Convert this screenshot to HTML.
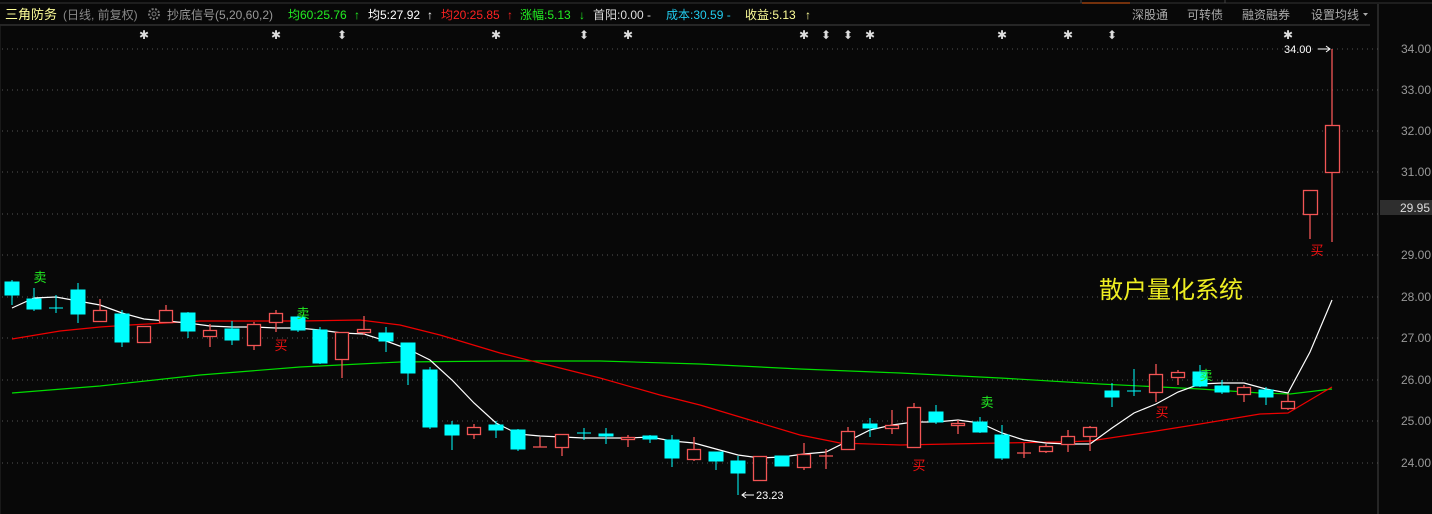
<!DOCTYPE html>
<html><head><meta charset="utf-8"><style>
html,body{margin:0;padding:0;background:#080808;width:1432px;height:514px;overflow:hidden}
svg{display:block}
text{font-family:"Liberation Sans","Noto Sans CJK SC",sans-serif}
</style></head><body>
<svg width="1432" height="514" viewBox="0 0 1432 514" xmlns="http://www.w3.org/2000/svg">
<rect width="1432" height="514" fill="#080808"/>
<line x1="0" y1="3" x2="1432" y2="3" stroke="#333"/>
<line x1="1081" y1="0" x2="1081" y2="3" stroke="#444"/><line x1="1225" y1="0" x2="1225" y2="3" stroke="#444"/>
<line x1="1082" y1="3" x2="1130" y2="3" stroke="#e05a10"/>
<line x1="0" y1="25" x2="1370" y2="25" stroke="#444"/>
<line x1="1378" y1="4" x2="1378" y2="514" stroke="#444"/>
<line x1="0" y1="26" x2="0" y2="514" stroke="#2a2a2a"/>
<g font-size="12">
<text x="5" y="19" fill="#ffff99" font-size="13">三角防务</text>
<text x="63" y="19" fill="#888">(日线, 前复权)</text>
<circle cx="154" cy="14" r="5" fill="none" stroke="#777" stroke-width="2" stroke-dasharray="2 1.5"/><circle cx="154" cy="14" r="2" fill="none" stroke="#777"/>
<text x="167" y="19" fill="#999">抄底信号(5,20,60,2)</text>
<text x="288" y="19" fill="#22ee22">均60:25.76</text><text x="354" y="19" fill="#22ee22">↑</text>
<text x="368" y="19" fill="#ffffff">均5:27.92</text><text x="427" y="19" fill="#fff">↑</text>
<text x="441" y="19" fill="#ff2222">均20:25.85</text><text x="507" y="19" fill="#ff2222">↑</text>
<text x="520" y="19" fill="#22ee22">涨幅:5.13</text><text x="579" y="19" fill="#22ee22">↓</text>
<text x="593" y="19" fill="#dddddd">首阳:0.00 -</text>
<text x="666" y="19" fill="#22ccee">成本:30.59 -</text>
<text x="745" y="19" fill="#ffff99">收益:5.13</text><text x="805" y="19" fill="#ffff99">↑</text>
<text x="1132" y="19" fill="#aaa">深股通</text>
<text x="1187" y="19" fill="#aaa">可转债</text>
<text x="1242" y="19" fill="#aaa">融资融券</text>
<text x="1311" y="19" fill="#aaa">设置均线</text>
<path d="M1363 13h5l-2.5 3z" fill="#aaa"/>
</g>
<g fill="#ddd" font-size="12" text-anchor="middle">
<text x="144" y="39">✱</text><text x="276" y="39">✱</text><text x="342" y="39">⬍</text><text x="496" y="39">✱</text><text x="584" y="39">⬍</text><text x="628" y="39">✱</text><text x="804" y="39">✱</text><text x="826" y="39">⬍</text><text x="848" y="39">⬍</text><text x="870" y="39">✱</text><text x="1002" y="39">✱</text><text x="1068" y="39">✱</text><text x="1112" y="39">⬍</text><text x="1288" y="39">✱</text>
</g>
<g stroke="#555" stroke-dasharray="1 4">
<line x1="2" y1="49" x2="1378" y2="49"/><line x1="2" y1="90" x2="1378" y2="90"/><line x1="2" y1="131" x2="1378" y2="131"/><line x1="2" y1="172" x2="1378" y2="172"/><line x1="2" y1="214" x2="1378" y2="214"/><line x1="2" y1="255" x2="1378" y2="255"/><line x1="2" y1="297" x2="1378" y2="297"/><line x1="2" y1="338" x2="1378" y2="338"/><line x1="2" y1="380" x2="1378" y2="380"/><line x1="2" y1="421" x2="1378" y2="421"/><line x1="2" y1="463" x2="1378" y2="463"/>
</g>
<g fill="#999" font-size="12" font-family="Liberation Mono">
<text x="1401" y="53">34.00</text><text x="1401" y="94">33.00</text><text x="1401" y="135">32.00</text><text x="1401" y="176">31.00</text><text x="1401" y="259">29.00</text><text x="1401" y="301">28.00</text><text x="1401" y="342">27.00</text><text x="1401" y="384">26.00</text><text x="1401" y="425">25.00</text><text x="1401" y="467">24.00</text>
</g>
<rect x="1380" y="200" width="52" height="15" fill="#2e2e2e"/>
<text x="1400" y="212" fill="#ddd" font-size="12" font-family="Liberation Mono">29.95</text>
<polyline fill="none" stroke="#00dd00" stroke-width="1.2" points="12,393 100,386 200,375 300,367 400,362 500,361 600,361 700,364 800,369 900,373 1000,378 1100,384 1200,389 1260,393 1290,394 1332,389"/>
<polyline fill="none" stroke="#ee0000" stroke-width="1.2" points="12,339 60,331 100,327 130,325 200,321 300,321 360,320 400,325 440,335 500,353 540,363 600,378 660,395 700,405 750,420 800,435 840,443 900,445 1000,443 1060,442 1090,441 1150,432 1200,424 1260,414 1288,413 1310,400 1332,387"/>
<polyline fill="none" stroke="#ffffff" stroke-width="1.2" points="12,308 34,298 56,297 78,301 100,305 122,313 144,319 166,321 188,323 210,326 232,327 254,327 276,328 298,328 320,330 342,333 364,334 386,341 408,349 430,360 452,380 474,403 496,423 518,434 540,436 562,437 584,438 606,438 628,438 650,437 672,441 694,443 716,449 738,455 760,458 782,457 804,454 826,452 848,441 870,430 892,425 914,422 936,422 958,420 980,423 1002,433 1024,440 1046,443 1068,444 1090,444 1112,428 1134,413 1156,404 1178,392 1200,384 1222,383 1244,383 1266,389 1288,393 1310,352 1332,300"/>
<g stroke="#00ffff" fill="#00ffff">
<line x1="12" y1="280" x2="12" y2="305"/><rect x="5" y="282" width="14" height="13"/>
<line x1="34" y1="288" x2="34" y2="311"/><rect x="27" y="299" width="14" height="10"/>
<line x1="56" y1="295" x2="56" y2="313"/><line x1="49" y1="308" x2="63" y2="308"/>
<line x1="78" y1="283" x2="78" y2="323"/><rect x="71" y="290" width="14" height="24"/>
<line x1="122" y1="310" x2="122" y2="347"/><rect x="115" y="314" width="14" height="28"/>
<line x1="188" y1="312" x2="188" y2="338"/><rect x="181" y="313" width="14" height="18"/>
<line x1="232" y1="321" x2="232" y2="345"/><rect x="225" y="329" width="14" height="11"/>
<line x1="298" y1="316" x2="298" y2="332"/><rect x="291" y="317" width="14" height="13"/>
<line x1="320" y1="327" x2="320" y2="364"/><rect x="313" y="330" width="14" height="33"/>
<line x1="386" y1="327" x2="386" y2="352"/><rect x="379" y="333" width="14" height="8"/>
<line x1="408" y1="343" x2="408" y2="385"/><rect x="401" y="343" width="14" height="30"/>
<line x1="430" y1="367" x2="430" y2="429"/><rect x="423" y="370" width="14" height="57"/>
<line x1="452" y1="421" x2="452" y2="450"/><rect x="445" y="425" width="14" height="10"/>
<line x1="496" y1="421" x2="496" y2="438"/><rect x="489" y="425" width="14" height="5"/>
<line x1="518" y1="429" x2="518" y2="451"/><rect x="511" y="430" width="14" height="19"/>
<line x1="584" y1="428" x2="584" y2="440"/><line x1="577" y1="433" x2="591" y2="433"/>
<line x1="606" y1="428" x2="606" y2="444"/><rect x="599" y="434" width="14" height="2"/>
<line x1="650" y1="435" x2="650" y2="443"/><rect x="643" y="436" width="14" height="3"/>
<line x1="672" y1="435" x2="672" y2="467"/><rect x="665" y="440" width="14" height="18"/>
<line x1="716" y1="452" x2="716" y2="470"/><rect x="709" y="452" width="14" height="9"/>
<line x1="738" y1="456" x2="738" y2="495"/><rect x="731" y="461" width="14" height="12"/>
<rect x="775" y="456" width="14" height="10"/>
<line x1="870" y1="418" x2="870" y2="437"/><rect x="863" y="424" width="14" height="4"/>
<line x1="936" y1="405" x2="936" y2="424"/><rect x="929" y="412" width="14" height="10"/>
<line x1="980" y1="417" x2="980" y2="433"/><rect x="973" y="422" width="14" height="10"/>
<line x1="1002" y1="425" x2="1002" y2="460"/><rect x="995" y="435" width="14" height="23"/>
<line x1="1112" y1="383" x2="1112" y2="407"/><rect x="1105" y="391" width="14" height="6"/>
<line x1="1134" y1="369" x2="1134" y2="396"/><line x1="1127" y1="391" x2="1141" y2="391"/>
<line x1="1200" y1="365" x2="1200" y2="387"/><rect x="1193" y="372" width="14" height="14"/>
<line x1="1222" y1="380" x2="1222" y2="394"/><rect x="1215" y="386" width="14" height="6"/>
<line x1="1266" y1="387" x2="1266" y2="405"/><rect x="1259" y="390" width="14" height="7"/>
</g>
<g stroke="#f25555" fill="#080808" stroke-width="1.3">
<line x1="100" y1="299" x2="100" y2="310"/><rect x="93.5" y="310.5" width="13" height="11"/>
<rect x="137.5" y="326.5" width="13" height="16"/>
<line x1="166" y1="305" x2="166" y2="310"/><rect x="159.5" y="310.5" width="13" height="12"/>
<line x1="210" y1="324" x2="210" y2="347"/><rect x="203.5" y="330.5" width="13" height="6"/>
<line x1="254" y1="322" x2="254" y2="350"/><rect x="247.5" y="324.5" width="13" height="21"/>
<line x1="276" y1="310" x2="276" y2="332"/><rect x="269.5" y="313.5" width="13" height="9"/>
<line x1="342" y1="359" x2="342" y2="378"/><rect x="335.5" y="332.5" width="13" height="27"/>
<line x1="364" y1="316" x2="364" y2="335"/><rect x="357.5" y="329.5" width="13" height="3"/>
<line x1="474" y1="424" x2="474" y2="439"/><rect x="467.5" y="427.5" width="13" height="7"/>
<line x1="540" y1="437" x2="540" y2="447"/><line x1="533" y1="447" x2="547" y2="447"/>
<line x1="562" y1="447" x2="562" y2="456"/><rect x="555.5" y="434.5" width="13" height="13"/>
<line x1="628" y1="435" x2="628" y2="447"/><rect x="621.5" y="437.5" width="13" height="2"/>
<line x1="694" y1="437" x2="694" y2="461"/><rect x="687.5" y="449.5" width="13" height="10"/>
<rect x="753.5" y="456.5" width="13" height="24"/>
<line x1="804" y1="443" x2="804" y2="470"/><rect x="797.5" y="454.5" width="13" height="13"/>
<line x1="826" y1="449" x2="826" y2="469"/><line x1="819" y1="456" x2="833" y2="456"/>
<line x1="848" y1="427" x2="848" y2="450"/><rect x="841.5" y="431.5" width="13" height="18"/>
<line x1="892" y1="410" x2="892" y2="434"/><rect x="885.5" y="425.5" width="13" height="3"/>
<line x1="914" y1="403" x2="914" y2="448"/><rect x="907.5" y="407.5" width="13" height="40"/>
<line x1="958" y1="420" x2="958" y2="434"/><rect x="951.5" y="423.5" width="13" height="2"/>
<line x1="1024" y1="443" x2="1024" y2="458"/><line x1="1017" y1="453" x2="1031" y2="453"/>
<line x1="1046" y1="444" x2="1046" y2="453"/><rect x="1039.5" y="446.5" width="13" height="5"/>
<line x1="1068" y1="430" x2="1068" y2="452"/><rect x="1061.5" y="436.5" width="13" height="8"/>
<line x1="1090" y1="426" x2="1090" y2="451"/><rect x="1083.5" y="427.5" width="13" height="9"/>
<line x1="1156" y1="364" x2="1156" y2="402"/><rect x="1149.5" y="374.5" width="13" height="18"/>
<line x1="1178" y1="370" x2="1178" y2="385"/><rect x="1171.5" y="372.5" width="13" height="5"/>
<line x1="1244" y1="385" x2="1244" y2="402"/><rect x="1237.5" y="387.5" width="13" height="7"/>
<line x1="1288" y1="394" x2="1288" y2="410"/><rect x="1281.5" y="401.5" width="13" height="7"/>
<line x1="1310" y1="214" x2="1310" y2="239"/><rect x="1303.5" y="190.5" width="14" height="24"/>
<line x1="1332" y1="49" x2="1332" y2="125"/><line x1="1332" y1="172" x2="1332" y2="242"/><rect x="1325.5" y="125.5" width="14" height="47"/>
</g>
<g font-size="13" text-anchor="middle">
<text x="40" y="282" fill="#22ee22">卖</text><text x="303" y="318" fill="#22ee22">卖</text><text x="987" y="407" fill="#22ee22">卖</text><text x="1206" y="380" fill="#22ee22">卖</text>
<text x="281" y="350" fill="#ee1111">买</text><text x="919" y="470" fill="#ee1111">买</text><text x="1162" y="417" fill="#ee1111">买</text><text x="1317" y="255" fill="#ee1111">买</text>
</g>
<text x="1284" y="53" fill="#fff" font-size="11">34.00</text>
<path d="M1318 49h12M1326 46l4 3-4 3" stroke="#fff" fill="none"/>
<path d="M742 495h12M746 492l-4 3 4 3" stroke="#fff" fill="none"/>
<text x="756" y="499" fill="#fff" font-size="11">23.23</text>
<text x="1099" y="298" fill="#eeee22" font-size="24">散户量化系统</text>
</svg>
</body></html>
